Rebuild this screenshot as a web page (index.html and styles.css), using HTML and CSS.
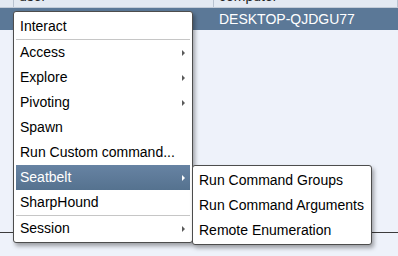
FILE: index.html
```html
<!DOCTYPE html>
<html lang="en">
<head>
    <meta charset="UTF-8">
    <meta name="viewport" content="width=device-width, initial-scale=1.0">
    <title>Beacons</title>
    <link rel="stylesheet" href="styles.css">
</head>
<body>
    <div class="table-pane">
        <div class="table-head">
            <div class="cell cell-gutter"></div>
            <div class="cell cell-user">user</div>
            <div class="cell cell-computer">computer</div>
        </div>
        <div class="table-row selected">
            <div class="cell cell-gutter"></div>
            <div class="cell cell-user">Ashura</div>
            <div class="cell cell-computer">DESKTOP-QJDGU77</div>
        </div>
    </div>

    <!-- Context menu -->
    <div class="menu">
        <div class="menu-item">Interact</div>
        <div class="menu-sep"></div>
        <div class="menu-item has-sub">Access</div>
        <div class="menu-item has-sub">Explore</div>
        <div class="menu-item has-sub">Pivoting</div>
        <div class="menu-item">Spawn</div>
        <div class="menu-item">Run Custom command...</div>
        <div class="menu-item has-sub active">Seatbelt
            <div class="menu submenu">
                <div class="menu-item">Run Command Groups</div>
                <div class="menu-item">Run Command Arguments</div>
                <div class="menu-item">Remote Enumeration</div>
            </div>
        </div>
        <div class="menu-item">SharpHound</div>
        <div class="menu-sep"></div>
        <div class="menu-item has-sub">Session</div>
    </div>
</body>
</html>
```

FILE: styles.css
```css
body {
    margin: 0;
    background-color: #eef2fa;
    font-family: "Liberation Sans", Arial, sans-serif;
    font-size: 14px;
    overflow: hidden;
}

.table-pane {
    height: 232px;
    border-bottom: 1px solid #3c3c3c;
}

.table-head {
    display: flex;
    height: 7px;
    overflow: hidden;
    background-color: #e3e9f2;
    border-bottom: 1px solid #c3ccd8;
}

.table-head .cell {
    margin-top: -14px;
    height: 21px;
    line-height: 21px;
    color: #222;
    border-right: 1px solid #b8c2d0;
}

.cell {
    box-sizing: border-box;
    padding-left: 5px;
    white-space: nowrap;
}

.cell-gutter {
    width: 14px;
    padding: 0;
}

.cell-user {
    width: 200px;
}

.cell-computer {
    flex: 1;
}

.table-row {
    display: flex;
    height: 22px;
    line-height: 22px;
}

.table-row.selected {
    background-color: #5b7897;
    color: #fff;
}

/* Context menu */
.menu {
    position: absolute;
    left: 13px;
    top: 11px;
    width: 174px;
    padding: 2px 2px 1px;
    background-color: #fff;
    border: 1px solid #4d4d4d;
    border-radius: 3px;
    box-shadow: 2px 3px 4px rgba(0, 0, 0, 0.35);
    color: #000;
}

.menu-item {
    position: relative;
    height: 25px;
    line-height: 25px;
    padding-left: 4px;
    white-space: nowrap;
}

.menu-sep {
    height: 1px;
    background-color: #c6c6c6;
}

.has-sub::after {
    content: "";
    position: absolute;
    right: 5px;
    top: 10px;
    border-left: 3px solid #5a5a5a;
    border-top: 3px solid transparent;
    border-bottom: 3px solid transparent;
}

.menu-item.active {
    background: linear-gradient(#6783a3, #55728f);
    color: #fff;
}

.menu-item.active::after {
    border-left-color: #fff;
}

.submenu {
    left: calc(100% + 2px);
    top: 0;
    width: 176px;
    padding-right: 0;
}
```
